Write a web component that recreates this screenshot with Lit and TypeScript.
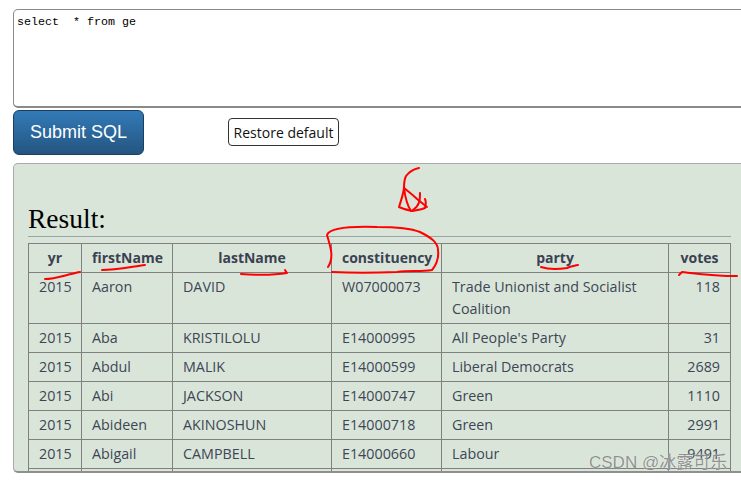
import { LitElement, html, css, svg } from 'lit';
import { customElement } from 'lit/decorators.js';

const COLUMNS = [
  { key: 'yr', width: 53 },
  { key: 'firstName', width: 91 },
  { key: 'lastName', width: 159 },
  { key: 'constituency', width: 110 },
  { key: 'party', width: 227 },
  { key: 'votes', width: 62 },
];

const ROWS = [
  ['2015', 'Aaron', 'DAVID', 'W07000073', 'Trade Unionist and Socialist Coalition', '118'],
  ['2015', 'Aba', 'KRISTILOLU', 'E14000995', "All People's Party", '31'],
  ['2015', 'Abdul', 'MALIK', 'E14000599', 'Liberal Democrats', '2689'],
  ['2015', 'Abi', 'JACKSON', 'E14000747', 'Green', '1110'],
  ['2015', 'Abideen', 'AKINOSHUN', 'E14000718', 'Green', '2991'],
  ['2015', 'Abigail', 'CAMPBELL', 'E14000660', 'Labour', '9491'],
  ['', '', '', '', '', ''],
];

// hand-drawn red pen marks, in page coordinates
const MARKS = [
  'M45 279 C55 279 65 275 80 272',
  'M102 270 C115 270 130 267 145 265',
  'M241 274 C255 275 275 275 287 273 L285 270',
  'M328 267 C334 258 331 248 327 235 C329 229 345 226 377 227 C395 227 410 228 420 232 C432 238 438 243 438 250 C439 258 437 264 432 270 C420 272 410 270 397 272 C375 273 350 273 332 272',
  'M541 267 C550 270 560 269 567 268 C571 266 574 266 578 265',
  'M679 275 L682 272 C700 274 715 276 737 276',
  'M419 168 C414 169 409 172 406 176 C404 180 404 185 404 188 C403 195 401 201 399 207 C403 209 408 210 412 211 C417 210 421 210 425 208 C426 204 426 201 425 199',
  'M404 188 C409 192 413 195 417 199 L427 207',
  'M404 188 C405 196 407 205 411 211',
  'M420 193 C420 200 420 205 413 210',
];

@customElement('app-root')
export class AppRoot extends LitElement {
  static styles = css`
    :host {
      display: block;
      position: relative;
      width: 741px;
      height: 482px;
      overflow: hidden;
      background: #fff;
    }

    .page {
      display: flex;
      flex-direction: column;
      width: 790px;
      padding: 9px 0 0 13px;
      box-sizing: border-box;
    }

    /* === Query form === */
    .sql {
      display: block;
      width: 100%;
      height: 99px;
      box-sizing: border-box;
      margin: 0;
      padding: 5px 3px;
      border: 1px solid #8a8a8a;
      border-bottom: 2px solid #8a8a8a;
      border-radius: 5px;
      font: 11.67px/14px 'Liberation Mono', monospace;
      color: #000;
      background: #fff;
      resize: none;
      outline: none;
    }

    .actions {
      display: flex;
      align-items: center;
      gap: 84px;
      margin-top: 2px;
    }

    .submit {
      width: 131px;
      height: 45px;
      padding: 0;
      border: 1px solid #1b3f5f;
      border-radius: 6px;
      background: linear-gradient(#337ab7, #245580);
      color: #fff;
      font: 18px 'Liberation Sans', Arial, sans-serif;
    }

    .restore {
      width: 111px;
      height: 28px;
      margin-bottom: 1px;
      padding: 0;
      border: 1px solid #333;
      border-radius: 4px;
      background: #fff;
      color: #111;
      font: 14px 'Open Sans', sans-serif;
    }

    /* === Result panel === */
    .panel {
      height: 310px;
      box-sizing: border-box;
      margin-top: 8px;
      padding: 0 14px;
      border: 1px solid #aaa;
      border-bottom: 2px solid #8f8f8f;
      border-radius: 5px;
      background: #dae5d9;
      overflow: hidden;
    }

    h2 {
      width: 703px;
      height: 32px;
      margin: 40px 0 0;
      font: 400 27.5px/30px 'Liberation Serif', serif;
      color: #000;
      border-bottom: 1px solid #9aa3a6;
    }

    .scroller {
      width: 703px;
      margin-top: 6px;
    }

    table {
      width: 703px;
      table-layout: fixed;
      border-collapse: collapse;
      font: 14.3px/22px 'Open Sans', sans-serif;
      color: #3d4656;
    }

    th, td {
      padding: 3px 10px;
      border: 1px solid #808080;
      box-sizing: border-box;
    }

    th {
      height: 29px;
      text-align: center;
      font-size: 14px;
      font-weight: 700;
      color: #3a4252;
    }

    td { vertical-align: top; text-align: left; }
    td.center { text-align: center; }
    td.right { text-align: right; }

    /* === Overlays: pen marks and image watermark === */
    .marks {
      position: absolute;
      inset: 0;
      pointer-events: none;
    }

    .marks path {
      fill: none;
      stroke: #f00;
      stroke-width: 2;
      stroke-linecap: round;
      stroke-linejoin: round;
    }

    .watermark {
      position: absolute;
      left: 589px;
      top: 452px;
      font: 17px/22px 'Liberation Sans', 'Noto Sans CJK SC', sans-serif;
      color: rgba(110, 110, 110, 0.75);
      text-shadow: 0 0 1px rgba(255, 255, 255, 0.9);
      white-space: nowrap;
    }
  `;

  private cellClass(i: number) {
    if (i === 0) return 'center';
    return i === COLUMNS.length - 1 ? 'right' : '';
  }

  render() {
    return html`
      <div class="page">
        <textarea class="sql" spellcheck="false" .value=${'select  * from ge'}></textarea>
        <div class="actions">
          <button class="submit">Submit SQL</button>
          <button class="restore">Restore default</button>
        </div>
        <section class="panel">
          <h2>Result:</h2>
          <div class="scroller">
            <table>
              <colgroup>
                ${COLUMNS.map((c) => html`<col style="width:${c.width}px" />`)}
              </colgroup>
              <thead>
                <tr>${COLUMNS.map((c) => html`<th>${c.key}</th>`)}</tr>
              </thead>
              <tbody>
                ${ROWS.map(
                  (row) => html`<tr>
                    ${row.map((v, i) => html`<td class=${this.cellClass(i)}>${v || html`&nbsp;`}</td>`)}
                  </tr>`
                )}
              </tbody>
            </table>
          </div>
        </section>
      </div>
      <svg class="marks" width="741" height="482" viewBox="0 0 741 482">
        ${MARKS.map((d) => svg`<path d=${d}></path>`)}
      </svg>
      <div class="watermark">CSDN @冰露可乐</div>
    `;
  }
}

declare global {
  interface HTMLElementTagNameMap {
    'app-root': AppRoot;
  }
}
